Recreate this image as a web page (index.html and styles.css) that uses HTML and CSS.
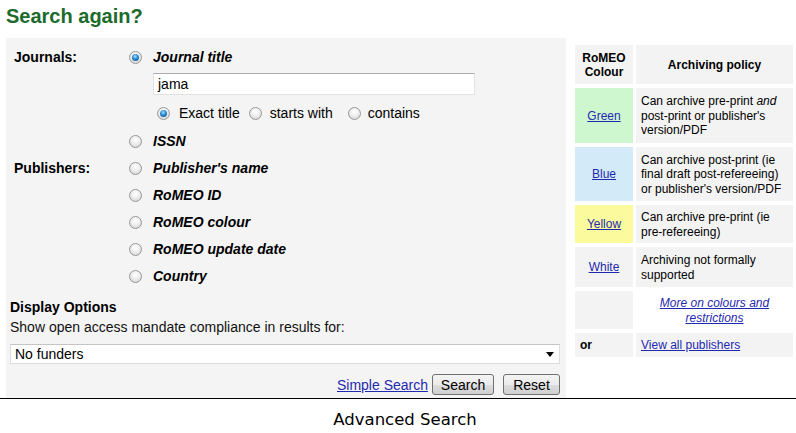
FILE: index.html
```html
<!DOCTYPE html>
<html>
<head>
<meta charset="utf-8">
<link rel="stylesheet" href="styles.css">
</head>
<body>
<div class="page">
  <h2 class="title">Search again?</h2>
  <div class="main">
    <form class="panel">
      <div class="grid">
        <div class="lbl">Journals:</div>
        <div class="rcell"><span class="radio checked"></span></div>
        <div class="opt">Journal title</div>

        <div class="lbl"></div>
        <div class="rcell"></div>
        <div class="inrow"><div class="textbox">jama</div></div>

        <div class="lbl"></div>
        <div class="rcell"></div>
        <div class="subrow">
          <span class="radio checked r1"></span><span class="sublbl">Exact title</span>
          <span class="radio r2"></span><span class="sublbl">starts with</span>
          <span class="radio r3"></span><span class="sublbl">contains</span>
        </div>

        <div class="lbl"></div>
        <div class="rcell"><span class="radio"></span></div>
        <div class="opt">ISSN</div>

        <div class="lbl">Publishers:</div>
        <div class="rcell"><span class="radio"></span></div>
        <div class="opt">Publisher's name</div>

        <div class="lbl"></div>
        <div class="rcell"><span class="radio"></span></div>
        <div class="opt">RoMEO ID</div>

        <div class="lbl"></div>
        <div class="rcell"><span class="radio"></span></div>
        <div class="opt">RoMEO colour</div>

        <div class="lbl"></div>
        <div class="rcell"><span class="radio"></span></div>
        <div class="opt">RoMEO update date</div>

        <div class="lbl"></div>
        <div class="rcell"><span class="radio"></span></div>
        <div class="opt">Country</div>
      </div>

      <div class="display">
        <div class="dhead">Display Options</div>
        <div class="dtext">Show open access mandate compliance in results for:</div>
        <div class="select"><span>No funders</span><span class="arrow"></span></div>
        <div class="buttons">
          <a class="link" href="#">Simple Search</a>
          <span class="btn btn-search">Search</span>
          <span class="btn btn-reset">Reset</span>
        </div>
      </div>
    </form>

    <table class="legend">
      <tr class="h-head">
        <th class="c1">RoMEO<br>Colour</th>
        <th class="c2">Archiving policy</th>
      </tr>
      <tr class="h-green">
        <td class="c1 green"><a href="#">Green</a></td>
        <td class="c2">Can archive pre-print <i>and</i><br>post-print or publisher's<br>version/PDF</td>
      </tr>
      <tr class="h-blue">
        <td class="c1 blue"><a href="#">Blue</a></td>
        <td class="c2">Can archive post-print (ie<br>final draft post-refereeing)<br>or publisher's version/PDF</td>
      </tr>
      <tr class="h-yellow">
        <td class="c1 yellow"><a href="#">Yellow</a></td>
        <td class="c2">Can archive pre-print (ie<br>pre-refereeing)</td>
      </tr>
      <tr class="h-white">
        <td class="c1"><a href="#">White</a></td>
        <td class="c2">Archiving not formally<br>supported</td>
      </tr>
      <tr class="h-more">
        <td class="c1"></td>
        <td class="c2 plain more"><a href="#">More on colours and<br>restrictions</a></td>
      </tr>
      <tr class="h-or">
        <td class="c1 or">or</td>
        <td class="c2"><a href="#">View all publishers</a></td>
      </tr>
    </table>
  </div>
  <div class="caption">Advanced Search</div>
</div>
</body>
</html>
```
FILE: styles.css
```css
* { box-sizing: border-box; }
html, body { margin: 0; padding: 0; background: #fff; }
body {
  font-family: "Liberation Sans", Arial, sans-serif;
  color: #000;
  width: 796px;
  height: 433px;
  overflow: hidden;
}
.page { width: 796px; }

.title {
  margin: 0;
  padding: 5px 0 0 6px;
  height: 38px;
  font-size: 20px;
  line-height: 23px;
  font-weight: bold;
  color: #1d6a2d;
}

.main {
  display: flex;
  align-items: flex-start;
  height: 361px;
  border-bottom: 1px solid #000;
}

.panel {
  margin: 0 0 0 6px;
  width: 560px;
  height: 360px;
  background: #f4f4f4;
  padding-top: 5px;
  font-size: 14px;
}

.grid {
  display: grid;
  grid-template-columns: 115px 24px 1fr;
  grid-template-rows: 27px 29px 28px 27px 27px 27px 27px 27px 27px;
  padding-left: 8px;
}
.lbl {
  font-weight: bold;
  display: flex;
  align-items: center;
}
.rcell {
  display: flex;
  align-items: center;
  padding-top: 2px;
}
.opt {
  font-weight: bold;
  font-style: italic;
  display: flex;
  align-items: center;
}
.inrow { padding-top: 3px; }
.textbox {
  width: 322px;
  height: 22px;
  background: #fff;
  border: 1px solid #e2e2e2;
  border-top-color: #ababab;
  padding: 2px 0 0 4px;
  line-height: 17px;
  font-size: 14px;
}
.subrow {
  display: flex;
  align-items: center;
}
.subrow .r1 { margin-left: 4px; margin-right: 9px; }
.subrow .r2 { margin-left: 9px; margin-right: 8px; }
.subrow .r3 { margin-left: 15px; margin-right: 7px; }
.sublbl { font-weight: normal; }

.radio {
  position: relative;
  display: inline-block;
  width: 13px;
  height: 13px;
  border-radius: 50%;
  border: 1px solid #979797;
  background: radial-gradient(circle at 50% 35%, #ffffff 0%, #f0f0f0 40%, #cfcfcf 100%);
  flex: none;
}
.radio.checked::after {
  content: "";
  position: absolute;
  left: 2px;
  top: 2px;
  width: 7px;
  height: 7px;
  border-radius: 50%;
  background: radial-gradient(circle at 45% 35%, #9fe0ff 0%, #2a8ad0 45%, #0d3e78 100%);
}

.display { padding: 9px 6px 0 4px; }
.dhead { font-weight: bold; line-height: 18px; height: 18px; }
.dtext { line-height: 18px; height: 18px; margin-top: 2px; color: #111; }
.select {
  margin-top: 8px;
  height: 20px;
  width: 550px;
  background: #fff;
  border: 1px solid #dcdcdc;
  border-top-color: #c4c4c4;
  display: flex;
  align-items: center;
  justify-content: space-between;
  padding: 0 5px 0 4px;
  line-height: 18px;
}
.arrow {
  width: 0; height: 0;
  border-left: 4px solid transparent;
  border-right: 4px solid transparent;
  border-top: 5px solid #000;
  margin-top: 1px;
}
.buttons {
  margin-top: 10px;
  display: flex;
  justify-content: flex-end;
  align-items: center;
  height: 21px;
}
.link { color: #1f29b0; text-decoration: underline; margin-right: 4px; }
.btn {
  height: 21px;
  border: 1px solid #707070;
  border-radius: 3px;
  background: linear-gradient(#f4f4f4 0%, #ebebeb 50%, #dddddd 51%, #d0d0d0 100%);
  display: flex;
  align-items: center;
  justify-content: center;
  line-height: 16px;
}
.btn-search { width: 62px; }
.btn-reset { width: 57px; margin-left: 9px; }

.legend {
  margin-left: 6px;
  margin-top: 3px;
  border-spacing: 3px 4px;
  font-size: 12px;
  line-height: 14.5px;
}
.legend th, .legend td {
  background: #f3f3f3;
  padding: 4px 5px 3px;
}
.legend th { font-weight: bold; }
.legend .c1 { width: 58px; text-align: center; }
.legend .c2 { width: 157px; white-space: nowrap; text-align: left; }
.legend th.c2 { text-align: center; }
.legend td.plain { background: #fff; }
.legend td.more { text-align: center; font-style: italic; }
.legend a { color: #1f29b0; text-decoration: underline; }
.legend .green { background: #cff7cf; }
.legend .blue { background: #d3eaf8; }
.legend .yellow { background: #fbfb9d; }
.legend td.or { text-align: left; font-weight: bold; }

.h-head { height: 39px; }
.h-green { height: 55px; }
.h-blue { height: 54px; }
.h-yellow { height: 38px; }
.h-white { height: 40px; }
.h-more { height: 38px; }
.h-or { height: 24px; }

.caption {
  text-align: center;
  font-family: "DejaVu Sans", Verdana, sans-serif;
  font-size: 16.5px;
  line-height: 20px;
  padding-top: 11px;
  padding-left: 14px;
}
```
